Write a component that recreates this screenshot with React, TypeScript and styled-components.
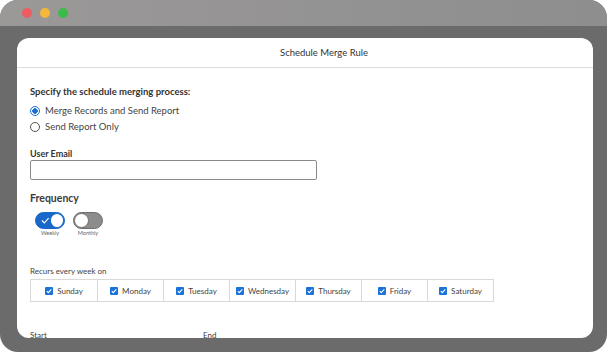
import styled, { createGlobalStyle } from "styled-components";

const GlobalStyle = createGlobalStyle`
  body {
    margin: 0;
    background: #ffffff;
    font-family: Lato, "Open Sans", sans-serif;
  }
`;

const days = ["Sunday", "Monday", "Tuesday", "Wednesday", "Thursday", "Friday", "Saturday"];

const CheckIcon = () => (
  <svg width="8" height="8" viewBox="0 0 8 8">
    <rect width="8" height="8" rx="1" fill="#1a73d9" />
    <path d="M1.8 4.2 L3.3 5.7 L6.3 2.4" stroke="#fff" strokeWidth="1.1" fill="none" />
  </svg>
);

const App = () => {
  return (
    <>
      <GlobalStyle />
      <Window>
        <TitleBar>
          <Dot color="#ed5c61" />
          <Dot color="#f6b63a" />
          <Dot color="#3bbb48" />
        </TitleBar>
        <Body>
          <Panel>
            <PanelHeader>Schedule Merge Rule</PanelHeader>
            <Content>
              <SectionTitle>Specify the schedule merging process:</SectionTitle>
              <RadioGroup>
                <RadioRow>
                  <Radio checked />
                  Merge Records and Send Report
                </RadioRow>
                <RadioRow>
                  <Radio />
                  Send Report Only
                </RadioRow>
              </RadioGroup>

              <FieldLabel>User Email</FieldLabel>
              <Input />

              <Heading>Frequency</Heading>
              <Toggles>
                <ToggleItem>
                  <Toggle on>
                    <svg width="9" height="7" viewBox="0 0 9 7">
                      <path d="M1 3.5 L3.5 6 L8 1" stroke="#fff" strokeWidth="1.2" fill="none" />
                    </svg>
                    <Knob on />
                  </Toggle>
                  <ToggleLabel>Weekly</ToggleLabel>
                </ToggleItem>
                <ToggleItem>
                  <Toggle>
                    <Knob />
                  </Toggle>
                  <ToggleLabel>Monthly</ToggleLabel>
                </ToggleItem>
              </Toggles>

              <SmallLabel>Recurs every week on</SmallLabel>
              <DayRow>
                {days.map((d) => (
                  <DayCell key={d}>
                    <CheckIcon />
                    {d}
                  </DayCell>
                ))}
              </DayRow>

              <DateRow>
                <DateLabel>Start</DateLabel>
                <DateLabel>End</DateLabel>
              </DateRow>
            </Content>
          </Panel>
        </Body>
      </Window>
    </>
  );
};

export default App;

const Window = styled.div`
  width: 607px;
  height: 352px;
  border-radius: 18px;
  background: #6b6b6b;
  overflow: hidden;
  display: flex;
  flex-direction: column;
`;

const TitleBar = styled.div`
  height: 26px;
  flex-shrink: 0;
  background: linear-gradient(90deg, #9b9898 0%, #8e8e8e 100%);
  display: flex;
  align-items: center;
  padding-left: 22px;
  gap: 8px;
`;

const Dot = styled.span<{ color: string }>`
  width: 10px;
  height: 10px;
  border-radius: 50%;
  background: ${(p) => p.color};
`;

const Body = styled.div`
  flex: 1;
  min-height: 0;
  padding: 12px 14px 14px 17px;
  display: flex;
`;

const Panel = styled.div`
  flex: 1;
  background: #ffffff;
  border-radius: 12px;
  overflow: hidden;
  display: flex;
  flex-direction: column;
`;

const PanelHeader = styled.div`
  height: 29px;
  flex-shrink: 0;
  border-bottom: 1px solid #dcdcdc;
  display: flex;
  align-items: center;
  justify-content: center;
  padding-left: 38px;
  font-size: 9.5px;
  color: #333;
`;

const Content = styled.div`
  padding: 17px 13px 0;
  display: flex;
  flex-direction: column;
  color: #333;
`;

const SectionTitle = styled.div`
  font-size: 9.5px;
  font-weight: 700;
  color: #333;
  line-height: 14px;
`;

const RadioGroup = styled.div`
  margin-top: 5px;
  display: flex;
  flex-direction: column;
  gap: 2px;
`;

const RadioRow = styled.label`
  display: flex;
  align-items: center;
  gap: 5px;
  font-size: 9.5px;
  color: #444;
  line-height: 14px;
`;

const Radio = styled.span<{ checked?: boolean }>`
  width: 10px;
  height: 10px;
  border-radius: 50%;
  border: 1px solid ${(p) => (p.checked ? "#1a6fd0" : "#555")};
  box-sizing: border-box;
  background: ${(p) => (p.checked ? "radial-gradient(circle, #1a6fd0 0 2.5px, #fff 3px)" : "#fff")};
`;

const FieldLabel = styled.div`
  margin-top: 14px;
  font-size: 9px;
  font-weight: 700;
  line-height: 12px;
`;

const Input = styled.div`
  width: 287px;
  height: 20px;
  box-sizing: border-box;
  border: 1px solid #8a8a8a;
  border-radius: 2px;
`;

const Heading = styled.div`
  margin-top: 10px;
  font-size: 10.5px;
  font-weight: 700;
  color: #3a3a3a;
  line-height: 16px;
`;

const Toggles = styled.div`
  margin-top: 6px;
  margin-left: 5px;
  display: flex;
  gap: 8px;
`;

const ToggleItem = styled.div`
  display: flex;
  flex-direction: column;
  align-items: center;
`;

const Toggle = styled.div<{ on?: boolean }>`
  width: 30px;
  height: 17px;
  box-sizing: border-box;
  border-radius: 9px;
  background: ${(p) => (p.on ? "#1768c9" : "#8c8c8c")};
  border: 1px solid ${(p) => (p.on ? "#1768c9" : "#6f6f6f")};
  display: flex;
  align-items: center;
  justify-content: ${(p) => (p.on ? "space-between" : "flex-start")};
  padding: ${(p) => (p.on ? "0 0 0 5px" : "0")};
`;

const Knob = styled.span<{ on?: boolean }>`
  width: 15px;
  height: 15px;
  border-radius: 50%;
  background: #fff;
  box-sizing: border-box;
  border: 1px solid ${(p) => (p.on ? "#1768c9" : "#6f6f6f")};
`;

const ToggleLabel = styled.span`
  font-size: 5.5px;
  color: #666;
  line-height: 8px;
`;

const SmallLabel = styled.div`
  margin-top: 29px;
  font-size: 8px;
  color: #444;
  line-height: 10px;
`;

const DayRow = styled.div`
  margin-top: 3px;
  width: 464px;
  display: grid;
  grid-template-columns: repeat(7, 1fr);
  border: 1px solid #d9d9d9;
  box-sizing: border-box;
`;

const DayCell = styled.div`
  height: 21px;
  display: flex;
  align-items: center;
  justify-content: center;
  gap: 4px;
  font-size: 8px;
  color: #444;
  & + & {
    border-left: 1px solid #d9d9d9;
  }
`;

const DateRow = styled.div`
  margin-top: 28px;
  display: flex;
`;

const DateLabel = styled.div`
  width: 173px;
  font-size: 8px;
  color: #444;
  line-height: 10px;
`;
